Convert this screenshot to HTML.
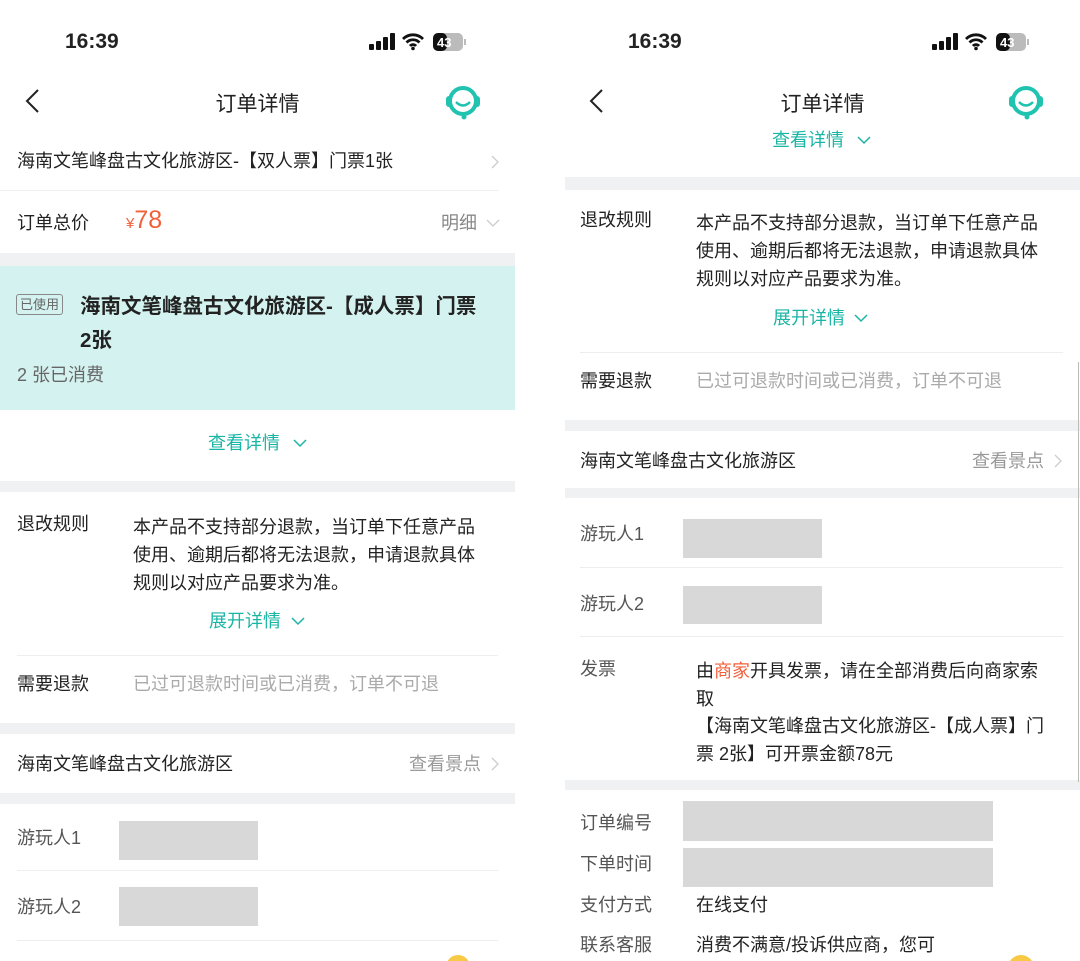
<!DOCTYPE html>
<html><head><meta charset="utf-8"><style>
*{margin:0;padding:0;box-sizing:border-box}
html,body{width:1080px;height:961px;overflow:hidden}
body{background:#fff;position:relative;font-family:"Liberation Sans","Noto Sans CJK SC",sans-serif;color:#222}
.a{position:absolute;white-space:nowrap}
.t{font-size:18px;line-height:22px}
.g{background:#eff1f3;position:absolute;height:11px}
.box{position:absolute;background:#d8d8d8}
.line{position:absolute;height:1px;background:#eee}
.teal{color:#19b5a5}
.grey{color:#999}
.time{font-size:21px;font-weight:bold;font-family:"Liberation Sans",sans-serif}
</style></head><body>
<!-- LEFT SCREEN -->
<div class="a time" style="left:65px;top:30px">16:39</div>
<svg class="a" style="left:369px;top:31px" width="105" height="24">
<rect x="0" y="13" width="5" height="6" rx="1" fill="#111"/><rect x="7" y="10" width="5" height="9" rx="1" fill="#111"/><rect x="14" y="6" width="5" height="13" rx="1" fill="#111"/><rect x="21" y="2" width="5" height="17" rx="1" fill="#111"/>
<path d="M34 8a14 14 0 0 1 20 0M37.5 11.5a9 9 0 0 1 13 0M41 15a4 4 0 0 1 6 0" stroke="#111" stroke-width="2.8" fill="none"/><circle cx="44" cy="17.5" r="1.8" fill="#111"/>
<rect x="64" y="2" width="30" height="18" rx="5" fill="#bbb"/><rect x="64" y="2" width="14" height="18" rx="5" fill="#111"/><text x="68" y="16" font-size="13" fill="#fff" font-family="Liberation Sans" font-weight="bold">43</text><rect x="95" y="8" width="2" height="6" fill="#bbb"/>
</svg>
<svg class="a" style="left:24px;top:88px" width="16" height="26"><path d="M14 2L3 13l11 11" stroke="#222" stroke-width="2" fill="none"/></svg>
<div class="a" style="left:0;width:515px;text-align:center;top:88px;font-size:21px">订单详情</div>
<svg class="a" style="left:444px;top:83px" width="40" height="38"><circle cx="19" cy="18" r="13" stroke="#1fc3b0" stroke-width="4" fill="none"/><path d="M12 19q7 7 14 0" stroke="#1fc3b0" stroke-width="2.5" fill="none"/><rect x="2" y="13" width="6" height="11" rx="3" fill="#1fc3b0"/><rect x="30" y="13" width="6" height="11" rx="3" fill="#1fc3b0"/><circle cx="20" cy="34" r="2.5" fill="#1fc3b0"/></svg>
<div class="a t" style="left:17px;top:150px">海南文笔峰盘古文化旅游区-【双人票】门票1张</div>
<svg class="a" style="left:490px;top:154px" width="10" height="16"><path d="M2 2l6 6-6 6" stroke="#ccc" stroke-width="1.3" fill="none"/></svg>
<div class="line" style="left:0;width:498px;top:190px"></div>
<div class="a t" style="left:17px;top:212px">订单总价</div>
<div class="a" style="left:126px;top:205px;color:#f2603a;font-size:25px;line-height:30px"><span style="font-size:15px">¥</span>78</div>
<div class="a t" style="left:441px;top:212px;color:#888">明细</div>
<svg class="a" style="left:485px;top:218px" width="16" height="10"><path d="M2 2l6 6 6-6" stroke="#ccc" stroke-width="1.3" fill="none"/></svg>
<div class="g" style="left:0;width:515px;top:253px;height:14px"></div>
<div class="a" style="left:0;width:515px;top:266px;height:144px;background:#d4f3f0"></div>
<div class="a" style="left:16px;top:294px;border:1px solid #888;border-radius:3px;font-size:13px;color:#666;padding:1px 3px;line-height:17px">已使用</div>
<div class="a" style="left:80px;top:290px;font-size:20.5px;font-weight:bold;line-height:34px;white-space:normal;width:440px">海南文笔峰盘古文化旅游区-【成人票】门票<br>2张</div>
<div class="a t" style="left:17px;top:364px;color:#666">2 张已消费</div>
<div class="a t teal" style="left:208px;top:432px">查看详情</div>
<svg class="a" style="left:292px;top:438px" width="16" height="10"><path d="M2 2l6 6 6-6" stroke="#19b5a5" stroke-width="1.5" fill="none"/></svg>
<div class="g" style="left:0;width:515px;top:481px"></div>
<div class="a t" style="left:17px;top:513px">退改规则</div>
<div class="a t" style="left:133px;top:513px;line-height:28px">本产品不支持部分退款，当订单下任意产品<br>使用、逾期后都将无法退款，申请退款具体<br>规则以对应产品要求为准。</div>
<div class="a t teal" style="left:209px;top:610px">展开详情</div>
<svg class="a" style="left:290px;top:616px" width="16" height="10"><path d="M2 2l6 6 6-6" stroke="#19b5a5" stroke-width="1.5" fill="none"/></svg>
<div class="line" style="left:17px;width:481px;top:655px"></div>
<div class="a t" style="left:17px;top:673px">需要退款</div>
<div class="a t" style="left:133px;top:673px;color:#aaa">已过可退款时间或已消费，订单不可退</div>
<div class="g" style="left:0;width:515px;top:723px"></div>
<div class="a t" style="left:17px;top:753px">海南文笔峰盘古文化旅游区</div>
<div class="a t grey" style="left:409px;top:753px">查看景点</div>
<svg class="a" style="left:490px;top:756px" width="10" height="16"><path d="M2 2l6 6-6 6" stroke="#ccc" stroke-width="1.3" fill="none"/></svg>
<div class="g" style="left:0;width:515px;top:793px"></div>
<div class="a t" style="left:17px;top:827px;color:#555">游玩人1</div>
<div class="box" style="left:119px;top:821px;width:139px;height:39px"></div>
<div class="line" style="left:17px;width:481px;top:870px"></div>
<div class="a t" style="left:17px;top:896px;color:#555">游玩人2</div>
<div class="box" style="left:119px;top:887px;width:139px;height:39px"></div>
<div class="line" style="left:17px;width:481px;top:940px"></div>
<div class="a" style="left:446px;top:955px;width:24px;height:24px;border-radius:50%;background:#f8c945"></div>

<!-- RIGHT SCREEN -->
<div class="a time" style="left:628px;top:30px">16:39</div>
<svg class="a" style="left:932px;top:31px" width="105" height="24">
<rect x="0" y="13" width="5" height="6" rx="1" fill="#111"/><rect x="7" y="10" width="5" height="9" rx="1" fill="#111"/><rect x="14" y="6" width="5" height="13" rx="1" fill="#111"/><rect x="21" y="2" width="5" height="17" rx="1" fill="#111"/>
<path d="M34 8a14 14 0 0 1 20 0M37.5 11.5a9 9 0 0 1 13 0M41 15a4 4 0 0 1 6 0" stroke="#111" stroke-width="2.8" fill="none"/><circle cx="44" cy="17.5" r="1.8" fill="#111"/>
<rect x="64" y="2" width="30" height="18" rx="5" fill="#bbb"/><rect x="64" y="2" width="14" height="18" rx="5" fill="#111"/><text x="68" y="16" font-size="13" fill="#fff" font-family="Liberation Sans" font-weight="bold">43</text><rect x="95" y="8" width="2" height="6" fill="#bbb"/>
</svg>
<svg class="a" style="left:588px;top:88px" width="16" height="26"><path d="M14 2L3 13l11 11" stroke="#222" stroke-width="2" fill="none"/></svg>
<div class="a" style="left:565px;width:515px;text-align:center;top:88px;font-size:21px">订单详情</div>
<svg class="a" style="left:1007px;top:83px" width="40" height="38"><circle cx="19" cy="18" r="13" stroke="#1fc3b0" stroke-width="4" fill="none"/><path d="M12 19q7 7 14 0" stroke="#1fc3b0" stroke-width="2.5" fill="none"/><rect x="2" y="13" width="6" height="11" rx="3" fill="#1fc3b0"/><rect x="30" y="13" width="6" height="11" rx="3" fill="#1fc3b0"/><circle cx="20" cy="34" r="2.5" fill="#1fc3b0"/></svg>
<div class="a t teal" style="left:772px;top:129px">查看详情</div>
<svg class="a" style="left:856px;top:135px" width="16" height="10"><path d="M2 2l6 6 6-6" stroke="#19b5a5" stroke-width="1.5" fill="none"/></svg>
<div class="g" style="left:565px;width:515px;top:177px;height:13px"></div>
<div class="a t" style="left:580px;top:209px">退改规则</div>
<div class="a t" style="left:696px;top:209px;line-height:28px">本产品不支持部分退款，当订单下任意产品<br>使用、逾期后都将无法退款，申请退款具体<br>规则以对应产品要求为准。</div>
<div class="a t teal" style="left:773px;top:307px">展开详情</div>
<svg class="a" style="left:853px;top:313px" width="16" height="10"><path d="M2 2l6 6 6-6" stroke="#19b5a5" stroke-width="1.5" fill="none"/></svg>
<div class="line" style="left:580px;width:483px;top:352px"></div>
<div class="a t" style="left:580px;top:370px">需要退款</div>
<div class="a t" style="left:696px;top:370px;color:#aaa">已过可退款时间或已消费，订单不可退</div>
<div class="g" style="left:565px;width:515px;top:420px"></div>
<div class="a t" style="left:580px;top:450px">海南文笔峰盘古文化旅游区</div>
<div class="a t grey" style="left:972px;top:450px">查看景点</div>
<svg class="a" style="left:1053px;top:453px" width="10" height="16"><path d="M2 2l6 6-6 6" stroke="#ccc" stroke-width="1.3" fill="none"/></svg>
<div class="g" style="left:565px;width:515px;top:488px;height:10px"></div>
<div class="a t" style="left:580px;top:523px;color:#555">游玩人1</div>
<div class="box" style="left:683px;top:519px;width:139px;height:39px"></div>
<div class="line" style="left:580px;width:483px;top:567px"></div>
<div class="a t" style="left:580px;top:593px;color:#555">游玩人2</div>
<div class="box" style="left:683px;top:586px;width:139px;height:38px"></div>
<div class="line" style="left:580px;width:483px;top:636px"></div>
<div class="a t" style="left:580px;top:658px;color:#555">发票</div>
<div class="a t" style="left:696px;top:658px;line-height:27.5px">由<span style="color:#f2603a">商家</span>开具发票，请在全部消费后向商家索<br>取<br>【海南文笔峰盘古文化旅游区-【成人票】门<br>票 2张】可开票金额78元</div>
<div class="g" style="left:565px;width:515px;top:780px;height:10px"></div>
<div class="a t" style="left:580px;top:812px;color:#555">订单编号</div>
<div class="box" style="left:683px;top:801px;width:310px;height:40px"></div>
<div class="a t" style="left:580px;top:853px;color:#555">下单时间</div>
<div class="box" style="left:683px;top:848px;width:310px;height:39px"></div>
<div class="a t" style="left:580px;top:894px;color:#555">支付方式</div>
<div class="a t" style="left:696px;top:894px">在线支付</div>
<div class="a t" style="left:580px;top:934px;color:#555">联系客服</div>
<div class="a t" style="left:696px;top:934px">消费不满意/投诉供应商，您可</div>
<div class="a" style="left:1078px;top:362px;width:1px;height:420px;background:#bbb"></div>
<div class="a" style="left:1008px;top:955px;width:26px;height:26px;border-radius:50%;background:#f8c945"></div>
</body></html>
